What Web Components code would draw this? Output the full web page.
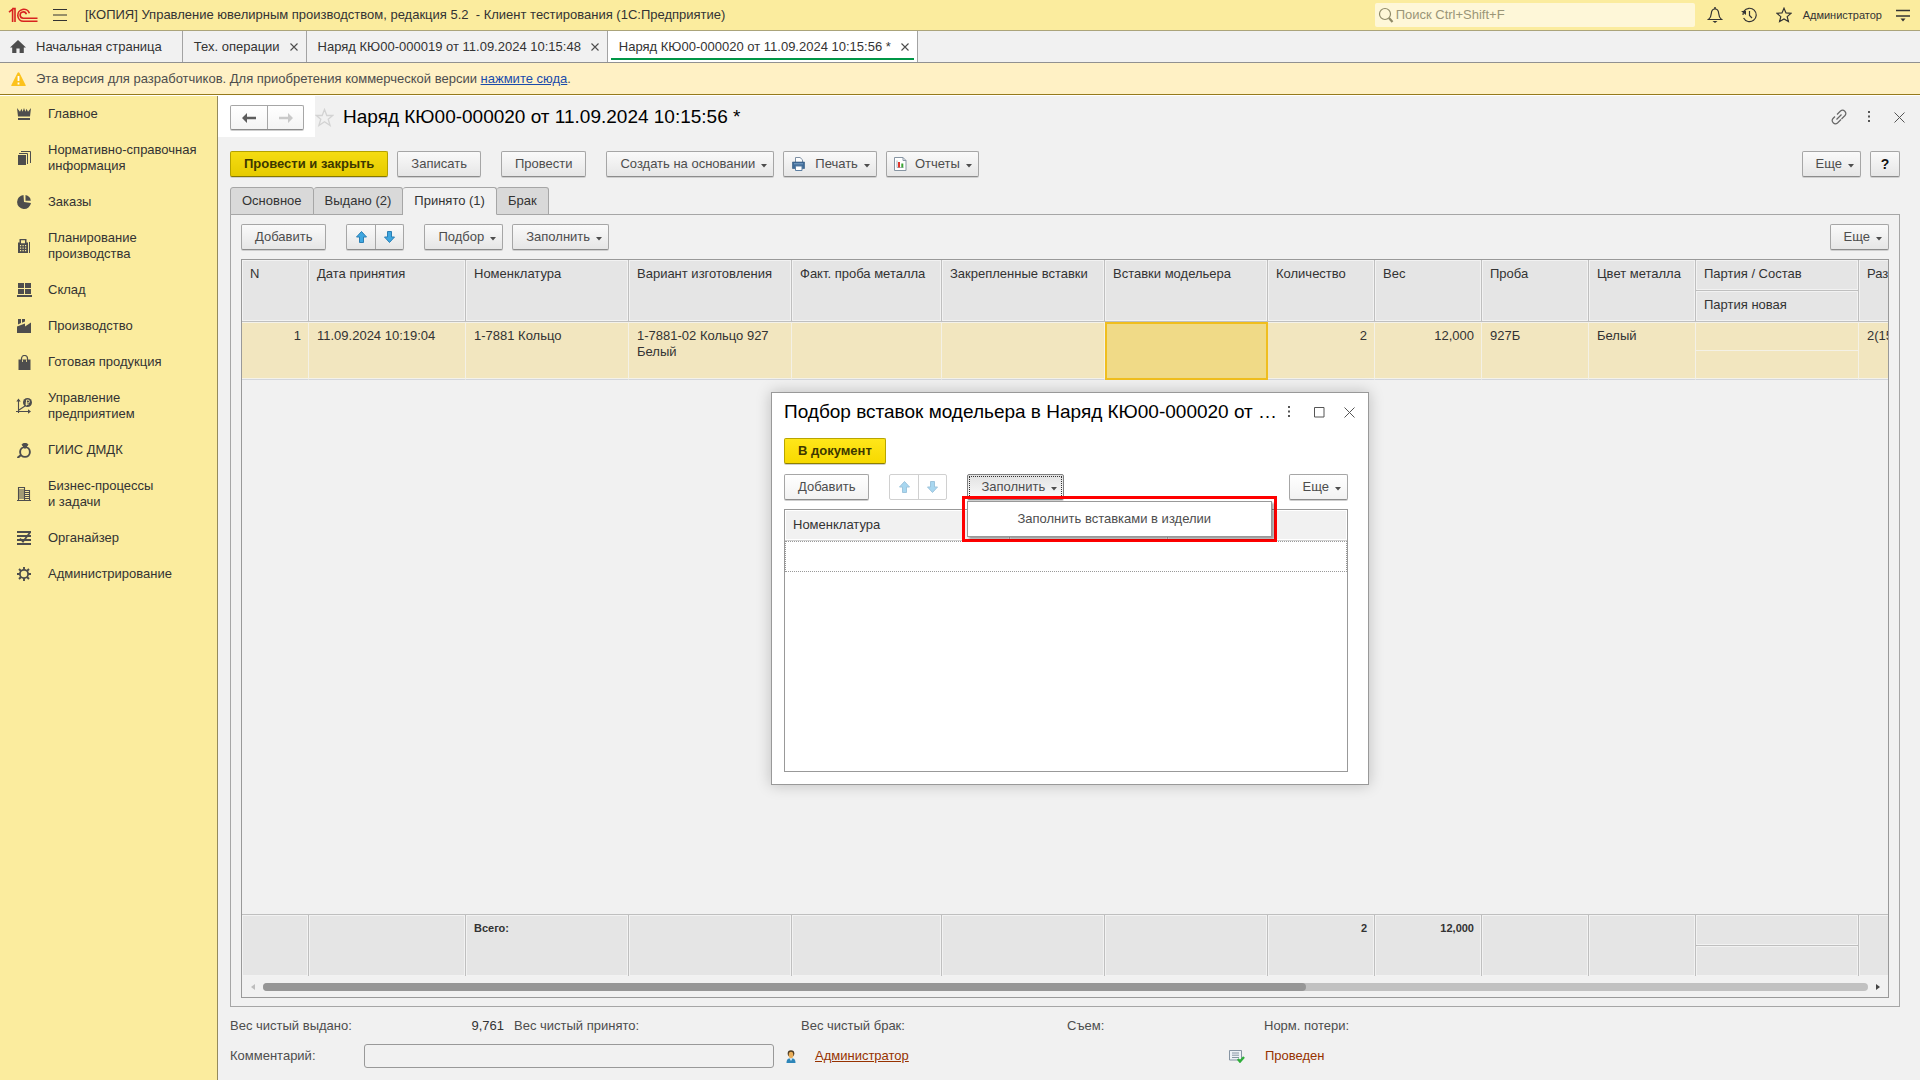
<!DOCTYPE html>
<html lang="ru">
<head>
<meta charset="utf-8">
<title>Управление ювелирным производством</title>
<style>
  body { margin: 0; font: 13px/16px "Liberation Sans", Arial, sans-serif; color: #333; background: #f1f1f1; }
</style>
</head>
<body>
<app-shell>
  <app-topbar slot="top"></app-topbar>
  <window-tabs slot="top"></window-tabs>
  <info-bar slot="top"></info-bar>
  <side-nav slot="side">
    <nav-item icon="crown">Главное</nav-item>
    <nav-item icon="books">Нормативно-справочная<br>информация</nav-item>
    <nav-item icon="pie">Заказы</nav-item>
    <nav-item icon="plan">Планирование<br>производства</nav-item>
    <nav-item icon="store">Склад</nav-item>
    <nav-item icon="factory">Производство</nav-item>
    <nav-item icon="bag">Готовая продукция</nav-item>
    <nav-item icon="manage">Управление<br>предприятием</nav-item>
    <nav-item icon="ring">ГИИС ДМДК</nav-item>
    <nav-item icon="building">Бизнес-процессы<br>и задачи</nav-item>
    <nav-item icon="organizer">Органайзер</nav-item>
    <nav-item icon="gear">Администрирование</nav-item>
  </side-nav>
  <order-form></order-form>
  <pick-dialog slot="window"></pick-dialog>
</app-shell>

<script>
const svg = (w, h, body) => `<svg width="${w}" height="${h}" viewBox="0 0 ${w} ${h}" fill="none" aria-hidden="true">${body}</svg>`;
const G = '#4d4d4d';
const ICONS = {
  logo: svg(30, 16, `<g stroke="#d8231f" stroke-width="1.6"><path d="M1 5.2 4.6 2.2V15M7 15V1.6H4.2"/><path d="M21.4 6.2A6 6 0 1 0 15.4 14.3H29.5"/><path d="M18.4 7.2A3.2 3.2 0 1 0 15.4 11.3H29.5"/></g>`),
  burger: svg(14, 12, `<path d="M0 .5h14M0 6h14M0 11.5h14" stroke="#333"/>`),
  search: svg(16, 16, `<circle cx="7" cy="7" r="5.5" stroke="#8f8a68" stroke-width="1.2"/><path d="m11 11 3.5 4" stroke="#8f8a68" stroke-width="2.2"/>`),
  bell: svg(16, 16, `<path d="M1.5 12.5h13c-2-1.500-2.600-3-2.800-6C11.500 3.500 10 2 8 2S4.500 3.500 4.300 6.500c-.2 3-.8 4.500-2.800 6Z" stroke="#333" stroke-width="1.200"/><path d="M8 0v2" stroke="#333" stroke-width="1.500"/><path d="M5.500 14h5L8 16Z" fill="#333"/>`),
  history: svg(17, 16, `<path d="M3 4.200A6.700 6.700 0 1 1 2.600 11M3 4.200A7 7 0 0 0 2 8" stroke="#333" stroke-width="1.200"/><path d="M0 4h5V8Z" fill="#333"/><path d="M8.500 4v4.500l2.500 2.500" stroke="#333" stroke-width="1.200"/>`),
  star: svg(16, 16, `<path d="m8 1.200 2 4.700 5.100.4-3.900 3.300 1.200 5L8 11.900l-4.400 2.700 1.200-5L.9 6.300 6 5.900Z" stroke="#333" stroke-width="1.200"/>`),
  settings: svg(14, 13, `<path d="M0 1.500h14M0 7h14" stroke="#333" stroke-width="1.300"/><path d="M4.500 9.500h5L7 12.500Z" fill="#333"/>`),
  home: svg(16, 13, `<path d="M8 0 16 7.500h-2.200V13H9.600V8.500H6.400V13H2.200V7.500H0Z" fill="${G}"/>`),
  close: svg(8, 8, `<path d="m.5.5 7 7M7.500.5l-7 7" stroke="#4d4d4d" stroke-width="1.100"/>`),
  closeBig: svg(11, 11, `<path d="m.5.5 10 10M10.500.5l-10 10" stroke="#555"/>`),
  warn: svg(15, 14, `<path d="M6.600.8 0.300 13.200q-.2.8.6.8h13.200q.8 0 .6-.8L8.400.8q-.9-1.300-1.800 0Z" fill="#fcc21c"/><path d="M7.500 4v5M7.500 10.500v2" stroke="#fff" stroke-width="1.800"/>`),
  crown: svg(14, 12, `<path d="M0 0 3 3.800 4.500 .8 5.600 3.800 7 0l1.400 3.800L9.500.8 11 3.800 14 0l-1 8.500H1Z" fill="${G}"/><path d="M1 10h12v2H1Z" fill="${G}"/>`),
  books: svg(13, 14, `<path d="M0 4h8v10H0Z" fill="${G}"/><path d="M1 2.500h8.500V13M3 .5h9.500V12" stroke="${G}"/>`),
  pie: svg(14, 14, `<path d="M6.500 0A7 7 0 1 0 14 8L7 7Z" fill="${G}"/><path d="M8.500 0A6.500 6.500 0 0 1 13.800 5.800H8.500Z" fill="${G}"/>`),
  plan: svg(13, 14, `<path fill-rule="evenodd" d="M1.500 0h7v3.500H10V14H0V3.500h1.500ZM3 1.200v3h4v-3ZM2 6v1.200h1.200V6Zm2.500 0v1.200h1.200V6ZM7 6v1.200h1.200V6ZM2 8.500v1.200h1.200V8.500Zm2.500 0v1.200h1.200V8.500Zm2.500 0v1.200h1.200V8.500ZM2 11v1.200h1.200V11Zm2.500 0v1.200h1.200V11ZM7 11v1.200h1.200V11Z" fill="${G}"/><path d="M11.500 3v11" stroke="${G}"/>`),
  store: svg(15, 14, `<path d="M1 0h6v5H1Zm7 0h6v5H8ZM1 6h6v5H1Zm7 0h6v5H8ZM0 12h15v2H0Z" fill="${G}"/>`),
  factory: svg(14, 14, `<path d="M0 7.500 8 4.500v3l6-4V14H0ZM1 0h3v4L1 5.500ZM5 0h3v2.500L5 3.800Z" fill="${G}"/>`),
  bag: svg(13, 15, `<path d="M.5 4.500h12V15H.5Z" fill="${G}"/><path d="M3.500 6V3.500a3 3 0 0 1 6 0V6" stroke="${G}" stroke-width="1.200"/><path d="M4.500 4.500V7M8.500 4.500V7" stroke="#fbec9e" stroke-width=".8"/>`),
  manage: svg(16, 16, `<path d="M2.500 15V2M0 13.500h14M3 12l6-4" stroke="${G}" stroke-width="1.100"/><path d="M.3 3.500 2.500.5l2.200 3ZM12 11.200l3 2.300-3 2.300Z" fill="${G}"/><circle cx="11.500" cy="4.500" r="4.500" fill="${G}"/><path d="M10.500 7.500v-5.500h1.500a1.400 1.400 0 0 1 0 3H9.500M9.500 6.300h3" stroke="#fbec9e" stroke-width=".9"/>`),
  ring: svg(15, 15, `<circle cx="8" cy="9" r="4.900" stroke="${G}" stroke-width="1.900"/><path d="M5 1.600 6.500 .5h3L11 1.600 8 5.500Z" fill="${G}" stroke="${G}"/><path d="M4 12 .5 15" stroke="${G}" stroke-width="2"/>`),
  building: svg(14, 14, `<path d="M1.500 14V.5h6V14M7.500 3.500h5V14M0 13.500h14M2 3h5M2 5h5M2 7h5M2 9h5M2 11h5M8 5.500h4M8 7.500h4M8 9.500h4M8 11.500h4" stroke="${G}" stroke-width="1.100"/>`),
  organizer: svg(14, 14, `<path d="M0 1h14M0 5h14M0 9h14M0 13h14" stroke="${G}" stroke-width="1.800"/><path d="m3 7.500 3 3.200L13 1.500" stroke="${G}" stroke-width="1.800"/>`),
  gear: svg(14, 14, `<circle cx="7" cy="7" r="4.100" stroke="${G}" stroke-width="1.800"/><path d="M7 0v3M7 11v3M0 7h3M11 7h3M2 2l2 2M10 10l2 2M12 2l-2 2M4 10l-2 2" stroke="${G}" stroke-width="1.900"/>`),
  back: svg(14, 10, `<path d="M5 0v10L0 5ZM4 3.800h10v2.400H4Z" fill="#5c5c5c"/>`),
  forward: svg(14, 10, `<path d="M9 0v10l5-5ZM10 3.800H0v2.400h10Z" fill="#c9c9c9"/>`),
  favorite: svg(19, 19, `<path d="m9.500 1.500 2.300 6h6l-4.600 3.800 1.900 6.200-5.600-3.800-5.600 3.800 1.900-6.200L1.200 7.500h6Z" stroke="#d3d3d3" stroke-width="1.300"/>`),
  link: svg(16, 16, `<g stroke="#666" stroke-width="1.200"><path d="M6 5.500 9.500 2a3.200 3.200 0 0 1 4.500 4.500L10.500 10M10 10.500 6.500 14A3.200 3.200 0 0 1 2 9.500L4 7.500"/><path d="m5.500 10.500 5-5"/></g>`),
  dots: svg(3, 12, `<path d="M0 0h2v2H0Zm0 4.500h2v2H0ZM0 9h2v2H0Z" fill="#555"/>`),
  maximize: svg(11, 11, `<path d="M.5.5h9.500v9.500H.5Z" stroke="#555"/>`),
  printer: svg(16, 14, `<path d="M4.500 5V.5H9l2.500 2.300V5" fill="#fff" stroke="#7d8fa3"/><path d="M1.500 5h12v6.500h-12Z" fill="#3f6c99" stroke="#2f567e" stroke-width=".6"/><path d="M3 6.800h9" stroke="#7fa3c6"/><path d="M4.500 9h6.500v4.500h-6.500Z" fill="#fff" stroke="#5c7fa3"/>`),
  report: svg(13, 14, `<path d="M.5.5h8.500l3 3v10H.5Z" fill="#fff" stroke="#8795a3"/><path d="M9 .5v3h3" stroke="#8795a3"/><path d="M3 3.500v7h6.500" stroke="#8795a3" stroke-width=".7"/><path d="M4 5h2v5.500H4Z" fill="#e0362c"/><path d="M7.300 6.500h2v4h-2Z" fill="#3aa535"/>`),
  up: svg(11, 12, `<path d="M5.500.5 10.500 6H7.500v5.500h-4V6H.5Z" fill="#3fa7e0" stroke="#2b7fb4"/>`),
  down: svg(11, 12, `<path d="M5.500 11.500.5 6h3V.5h4V6h3Z" fill="#3fa7e0" stroke="#2b7fb4"/>`),
  caret: svg(6, 4, `<path d="M0 0h6L3 3.500Z" fill="${G}"/>`),
  left: svg(5, 6, `<path d="M4 0v6L0 3Z" fill="#bdbdbd"/>`),
  right: svg(5, 6, `<path d="M1 0v6l4-3Z" fill="#444"/>`),
  person: svg(10, 13, `<circle cx="5" cy="3.500" r="3.300" fill="#4c3a22"/><ellipse cx="5" cy="5" rx="2.300" ry="3.200" fill="#e9ae5a"/><path d="M.5 13q0-4.500 2.800-4.500h3.400q2.800 0 2.800 4.500Z" fill="#2e86b9"/><path d="m3.800 8.500 1.200 2.500 1.200-2.500Z" fill="#fff"/>`),
  posted: svg(16, 13, `<path d="M.5.5h12v9.500H.5Z" fill="#eef2f6" stroke="#8795a3"/><path d="M3 3h7M3 5.200h7M3 7.500h7" stroke="#8795a3"/><path d="m8.800 9 2.200 2.500L15 7" stroke="#2fae3a" stroke-width="2.400"/>`)
};

const BASE = `
  :host { box-sizing: border-box; }
  *, *::before { box-sizing: border-box; }
  button, input { font: inherit; color: inherit; margin: 0; padding: 0; border: 0; background: none; }
  svg { display: block; flex: none; }
  h1, h2, p { margin: 0; font-weight: normal; }
  a { color: inherit; }
`;
const define = (name, css, html) => customElements.define(name, class extends HTMLElement {
  connectedCallback() {
    if (this.shadowRoot) return;
    const t = document.createElement('template');
    t.innerHTML = `<style>${BASE}${css}</style>${typeof html === 'function' ? html(this) : html}`;
    this.attachShadow({ mode: 'open' }).append(t.content.cloneNode(true));
  }
});

define('ui-icon', ':host { display: inline-flex; flex: none; }', el => ICONS[el.getAttribute('name')] || '');

define('app-shell', `
  :host { display: grid; grid-template: auto 1fr / 218px 1fr; height: 100vh; min-height: 700px; }
  header { grid-column: 1 / 3; border-bottom: 1px solid #fff; }
  aside { background: #fbec9e; border-right: 1px solid #948a5c; }
  main { display: flex; min-width: 0; min-height: 0; background: #f1f1f1; }
`, `<header><slot name="top"></slot></header>
  <aside><slot name="side"></slot></aside>
  <main><slot></slot></main>
  <slot name="window"></slot>`);

define('app-topbar', `
  :host { display: flex; align-items: center; height: 31px; padding: 0 10px 0 8px; background: #fbec9e; border-bottom: 1px solid #aba47a; color: #333; }
  button { display: flex; align-items: center; }
  .burger { margin: 0 18px 0 15px; }
  p { flex: 1; white-space: pre; }
  .search { display: flex; align-items: center; gap: 2px; width: 320px; height: 24px; padding-left: 3px; background: #fef7d8; border-radius: 2px; }
  .search input { flex: 1; outline: 0; }
  .search input::placeholder { color: #9a9577; opacity: 1; }
  nav { display: flex; align-items: center; gap: 18px; margin: 0 11px 0 12px; }
  .user { font-size: 11px; margin-right: 14px; }
`, `<ui-icon name="logo"></ui-icon>
  <button class="burger" aria-label="Меню"><ui-icon name="burger"></ui-icon></button>
  <p>[КОПИЯ] Управление ювелирным производством, редакция 5.2  - Клиент тестирования (1С:Предприятие)</p>
  <label class="search"><ui-icon name="search"></ui-icon><input type="search" placeholder="Поиск Ctrl+Shift+F" aria-label="Поиск"></label>
  <nav><button aria-label="Оповещения"><ui-icon name="bell"></ui-icon></button>
  <button aria-label="История"><ui-icon name="history"></ui-icon></button>
  <button aria-label="Избранное"><ui-icon name="star"></ui-icon></button></nav>
  <button class="user">Администратор</button>
  <button aria-label="Настройки"><ui-icon name="settings"></ui-icon></button>`);

define('window-tabs', `
  :host { display: flex; height: 32px; background: #f1f1f1; border-bottom: 1px solid #919191; }
  .tab { display: flex; align-items: center; gap: 10px; padding: 0 8px 0 11px; border-right: 1px solid #a3a3a3; }
  .home { padding: 0 20px 0 10px; }
  .tab button { display: flex; align-items: center; gap: 10px; white-space: nowrap; }
  .active { position: relative; background: #fff; }
  .active::before { content: ""; position: absolute; left: 3px; right: 3px; bottom: 2px; height: 2px; background: #009646; }
`, `<div class="tab home"><button><ui-icon name="home"></ui-icon>Начальная страница</button></div>
  ${['Тех. операции', 'Наряд КЮ00-000019 от 11.09.2024 10:15:48', 'Наряд КЮ00-000020 от 11.09.2024 10:15:56 *'].map((t, i) =>
    `<div class="tab${i === 2 ? ' active' : ''}"><button>${t}</button><button aria-label="Закрыть"><ui-icon name="close"></ui-icon></button></div>`).join('')}`);

define('info-bar', `
  :host { display: flex; align-items: center; gap: 10px; height: 32px; padding: 0 11px; background: #fff1c5; border-bottom: 1px solid #967a1c; color: #4d4d4d; }
  a { color: #1a4bab; }
`, `<ui-icon name="warn"></ui-icon><p>Эта версия для разработчиков. Для приобретения коммерческой версии <a href="#">нажмите сюда</a>.</p>`);

define('side-nav', ':host { display: block; } nav { display: flex; flex-direction: column; }', '<nav><slot></slot></nav>');

define('nav-item', `
  :host { display: block; }
  a { display: grid; grid-template-columns: 48px 1fr; align-items: center; padding: 10px 0; color: #333; text-decoration: none; }
  ui-icon { justify-self: center; }
`, el => `<a href="#"><ui-icon name="${el.getAttribute('icon')}"></ui-icon><span><slot></slot></span></a>`);

define('tool-button', `
  :host { display: inline-flex; }
  button { display: flex; align-items: center; justify-content: center; height: 26px; padding: 0 13px; border: 1px solid #a6a6a6; border-bottom-color: #8c8c8c; border-radius: 2px;
    background: linear-gradient(#fafafa, #e6e6e6); box-shadow: 0 1px #cfcfcf; color: #4d4d4d; white-space: nowrap; }
  :host([menu]) button { padding-right: 6px; }
  :host([icon]) button { padding-left: 7px; gap: 8px; }
  .caret { margin: 4px 0 0 6px; }
  :host([icon]) .caret { margin-left: -2px; }
  :host([tone=primary]) button { font-weight: bold; color: #3d3800; border-color: #b3a100; border-bottom-color: #857800; background: linear-gradient(#f5dc12, #e6cb00); }
  :host([tone=bright]) button { font-weight: bold; color: #3d3800; border-color: #b8a500; border-bottom-color: #8f8000; background: linear-gradient(#ffe61a, #f7d900); }
  :host([flat]) button { background: linear-gradient(#fff, #f2f2f2); }
  :host([pressed]) button { background: linear-gradient(#e2e2e2, #fafafa); border-color: #808080; outline: 1px dotted #333; outline-offset: -3px; }
  :host([help]) button { width: 30px; padding: 0; font-weight: bold; font-size: 14px; color: #111; }
`, el => `<button>${el.hasAttribute('icon') ? `<ui-icon name="${el.getAttribute('icon')}"></ui-icon>` : ''}<slot></slot>${el.hasAttribute('menu') ? '<ui-icon class="caret" name="caret"></ui-icon>' : ''}</button>`);

define('button-pair', `
  :host { display: inline-flex; border: 1px solid #a6a6a6; border-bottom-color: #8c8c8c; border-radius: 2px; background: linear-gradient(#fafafa, #e6e6e6); box-shadow: 0 1px #cfcfcf; }
  button { display: flex; align-items: center; justify-content: center; width: 28px; height: 24px; }
  button + button { border-left: 1px solid #a6a6a6; }
  :host([wide]) { background: linear-gradient(#fff, #f4f4f4); }
  :host([wide]) button { width: 36px; height: 23px; }
  :host([disabled]) { background: #fff; border-color: #d0d0d0; box-shadow: none; }
  :host([disabled]) button + button { border-color: #d0d0d0; }
  :host([disabled]) ui-icon { opacity: .45; }
`, el => {
  const [a, b] = el.getAttribute('icons').split(' ');
  return `<button aria-label="${a}"><ui-icon name="${a}"></ui-icon></button><button aria-label="${b}"><ui-icon name="${b}"></ui-icon></button>`;
});

define('order-form', `
  :host { display: flex; flex-direction: column; flex: 1; min-width: 0; }
  .head { display: flex; align-items: center; height: 42px; padding-right: 6px; }
  .nav { display: flex; align-self: flex-start; width: 97px; height: 41px; padding: 9px 0 0 12px; background: #fff; }
  .nav button-pair { align-self: flex-start; }
  .fav { margin-right: 9px; }
  h1 { flex: 1; font-size: 19px; line-height: 22px; color: #000; }
  .tools { display: flex; align-items: center; }
  .tools button { display: flex; justify-content: center; width: 30px; }
  .bar { display: flex; gap: 20px; }
  .group { display: flex; gap: 9px; }
  .push { margin-left: auto; }
  .body { display: flex; flex-direction: column; flex: 1; min-height: 0; padding: 13px 20px 12px 12px; }
  .tabs { position: relative; display: flex; margin: 10px 0 -1px; }
  .tabs button { height: 28px; padding: 0 11px; border: 1px solid #a6a6a6; border-left-width: 0; border-radius: 3px 3px 0 0; background: #d9d9d9; color: #333; }
  .tabs button:first-child { border-left-width: 1px; }
  .tabs .on { background: #f1f1f1; border-bottom-color: #f1f1f1; }
  .panel { display: flex; flex-direction: column; gap: 9px; flex: 1; min-height: 0; padding: 9px 10px; padding-bottom: 8px; border: 1px solid #a6a6a6; }
  order-grid { flex: 1; min-height: 0; }
  .sums { display: grid; grid-template-columns: 134px 140px 10px 287px 266px 197px 1fr; margin-top: 11px; color: #4d4d4d; }
  .sums output { text-align: right; color: #333; }
  .sums :nth-child(3) { grid-column: 4; }
  .note { display: grid; grid-template-columns: 134px 410px 12px 29px 414px 36px 1fr; align-items: center; margin-top: 10px; color: #4d4d4d; }
  .note input { height: 24px; padding: 0 6px; border: 1px solid #999; border-radius: 3px; }
  .note ui-icon { grid-column: 4; }
  .note .state { grid-column: 6; }
  .note a, .note span { justify-self: start; color: #963200; }
`, `<div class="head"><div class="nav"><button-pair wide icons="back forward"></button-pair></div>
    <ui-icon class="fav" name="favorite"></ui-icon><h1>Наряд КЮ00-000020 от 11.09.2024 10:15:56 *</h1>
    <div class="tools"><button aria-label="Ссылка"><ui-icon name="link"></ui-icon></button><button aria-label="Действия"><ui-icon name="dots"></ui-icon></button><button aria-label="Закрыть"><ui-icon name="closeBig"></ui-icon></button></div></div>
  <div class="body">
    <div class="bar">
      <div class="group"><tool-button tone="primary">Провести и закрыть</tool-button><tool-button>Записать</tool-button></div>
      <tool-button>Провести</tool-button>
      <div class="group"><tool-button menu>Создать на основании</tool-button><tool-button menu icon="printer">Печать</tool-button><tool-button menu icon="report">Отчеты</tool-button></div>
      <div class="group push"><tool-button menu>Еще</tool-button><tool-button help>?</tool-button></div>
    </div>
    <div class="tabs" role="tablist"><button role="tab">Основное</button><button role="tab">Выдано (2)</button><button role="tab" class="on" aria-selected="true">Принято (1)</button><button role="tab">Брак</button></div>
    <div class="panel">
      <div class="bar"><tool-button>Добавить</tool-button><button-pair icons="up down"></button-pair>
        <div class="group"><tool-button menu>Подбор</tool-button><tool-button menu>Заполнить</tool-button></div>
        <tool-button class="push" menu>Еще</tool-button></div>
      <order-grid></order-grid>
    </div>
    <div class="sums"><span>Вес чистый выдано:</span><output>9,761</output><span>Вес чистый принято:</span><span>Вес чистый брак:</span><span>Съем:</span><span>Норм. потери:</span></div>
    <div class="note"><label for="comment">Комментарий:</label><input id="comment" type="text"><ui-icon name="person"></ui-icon><a href="#">Администратор</a><ui-icon class="state" name="posted"></ui-icon><span>Проведен</span></div>
  </div>`);

const COLS = '<colgroup>' + [67, 157, 163, 163, 150, 163, 163, 107, 107, 107, 107, 163, 163].map(w => `<col style="width:${w}px">`).join('') + '</colgroup>';
define('order-grid', `
  :host { display: flex; flex-direction: column; overflow: hidden; border: 1px solid #999; background: #f1f1f1; color: #333; }
  table { flex: none; width: 1620px; table-layout: fixed; border-collapse: separate; border-spacing: 0; }
  th, td { padding: 6px 7px 0 8px; vertical-align: top; text-align: left; font-weight: normal; white-space: nowrap; border-right: 1px solid #bfbfbf; }
  th { height: 31px; background: #e5e5e5; border-bottom: 1px solid #bfbfbf; box-shadow: inset 0 0 0 1px #f2f2f2; }
  tbody td { height: 29px; background: #f2e6bf; border-right-color: #f4f1e6; border-bottom: 1px solid #d3d6dc; box-shadow: inset 0 1px #f4f2ea, inset 0 -1px #f4f2ea; }
  tbody td.half { border-bottom-color: #f4f1e6; box-shadow: inset 0 1px #f4f2ea; }
  tbody td.low { box-shadow: inset 0 -1px #f4f2ea; }
  .num { text-align: right; }
  td.wrap { white-space: normal; }
  tbody td.cur { background: #f0da87; border: 2px solid #f0be1e; box-shadow: none; }
  .space { flex: 1; }
  tfoot td { height: 30px; padding-top: 5px; background: #e5e5e5; box-shadow: inset 0 0 0 1px #f2f2f2; font-weight: bold; font-size: 11px; }
  tfoot td.half { height: 31px; border-bottom: 1px solid #bfbfbf; }
  .totals { border-top: 1px solid #bfbfbf; }
  .scroll { display: flex; align-items: center; gap: 7px; height: 21px; padding: 0 8px 0 9px; }
  .track { flex: 1; height: 8px; border-radius: 4px; background: #c1c1c1; }
  .thumb { width: 65%; height: 8px; border-radius: 4px; background: #969696; }
`, `<table>${COLS}<thead>
    <tr>${['N', 'Дата принятия', 'Номенклатура', 'Вариант изготовления', 'Факт. проба металла', 'Закрепленные вставки', 'Вставки модельера', 'Количество', 'Вес', 'Проба', 'Цвет металла'].map(t => `<th rowspan="2">${t}</th>`).join('')}<th>Партия / Состав</th><th rowspan="2">Размер</th></tr>
    <tr><th>Партия новая</th></tr></thead>
  <tbody><tr><td rowspan="2" class="num">1</td><td rowspan="2">11.09.2024 10:19:04</td><td rowspan="2">1-7881 Кольцо</td><td rowspan="2" class="wrap">1-7881-02 Кольцо 927 Белый</td><td rowspan="2"></td><td rowspan="2"></td><td rowspan="2" class="cur"></td><td rowspan="2" class="num">2</td><td rowspan="2" class="num">12,000</td><td rowspan="2">927Б</td><td rowspan="2">Белый</td><td class="half"></td><td rowspan="2">2(15,5)</td></tr><tr><td class="low"></td></tr></tbody></table>
  <div class="space"></div>
  <table class="totals">${COLS}<tfoot>
    <tr>${['', '', 'Всего:', '', '', '', '', '2', '12,000', '', ''].map((t, i) => `<td rowspan="2"${i > 6 ? ' class="num"' : ''}>${t}</td>`).join('')}<td class="half"></td><td rowspan="2"></td></tr>
    <tr><td></td></tr></tfoot></table>
  <div class="scroll"><ui-icon name="left"></ui-icon><div class="track"><div class="thumb"></div></div><ui-icon name="right"></ui-icon></div>`);

define('pick-dialog', `
  :host { position: absolute; left: 771px; top: 392px; width: 598px; height: 393px; display: flex; flex-direction: column; padding: 8px 20px 12px 12px;
    background: #fff; border: 1px solid #999; box-shadow: 0 0 14px rgba(0,0,0,.22); }
  .title { display: flex; align-items: center; height: 22px; margin: 0 -16px 15px 0; }
  h2 { flex: 1; min-width: 0; font-size: 19px; line-height: 22px; color: #000; white-space: nowrap; }
  .tools { display: flex; align-items: center; }
  .tools button { display: flex; justify-content: center; width: 30px; }
  .bar { display: flex; gap: 20px; margin: 10px 0 9px; }
  .push { margin-left: auto; }
  .drop { position: relative; display: flex; }
  .grid { flex: 1; border: 1px solid #999; }
  table { width: 100%; border-collapse: separate; border-spacing: 0; table-layout: fixed; }
  th { height: 31px; padding: 0 8px; text-align: left; font-weight: normal; background: #f1f1f1; border-right: 1px solid #bfbfbf; border-bottom: 1px solid #d0d0d0; box-shadow: inset 0 0 0 1px #fff; }
  th:last-child { border-right: 0; }
  td { height: 31px; padding: 0; border: 1px dotted #999; }
  .mark { position: absolute; z-index: 2; left: -5px; top: 22px; width: 315px; padding: 2px; border: 3px solid #f00; }
  .mark button { display: block; width: 305px; height: 36px; padding-left: 49px; text-align: left; background: #fff; border: 1px solid #999; box-shadow: 2px 2px 2px rgba(0,0,0,.35); color: #4d4d4d; }
`, `<div class="title"><h2>Подбор вставок модельера в Наряд КЮ00-000020 от …</h2>
    <div class="tools"><button aria-label="Действия"><ui-icon name="dots"></ui-icon></button><button aria-label="Развернуть"><ui-icon name="maximize"></ui-icon></button><button aria-label="Закрыть"><ui-icon name="closeBig"></ui-icon></button></div></div>
  <div><tool-button tone="bright">В документ</tool-button></div>
  <div class="bar"><tool-button flat>Добавить</tool-button><button-pair disabled icons="up down"></button-pair>
    <div class="drop"><tool-button menu pressed>Заполнить</tool-button><div class="mark"><button role="menuitem">Заполнить вставками в изделии</button></div></div>
    <tool-button class="push" flat menu>Еще</tool-button></div>
  <div class="grid"><table><colgroup><col style="width:225px"><col style="width:158px"><col></colgroup><thead><tr><th>Номенклатура</th><th></th><th></th></tr></thead><tbody><tr><td colspan="3"></td></tr></tbody></table></div>`);
</script>
</body>
</html>
